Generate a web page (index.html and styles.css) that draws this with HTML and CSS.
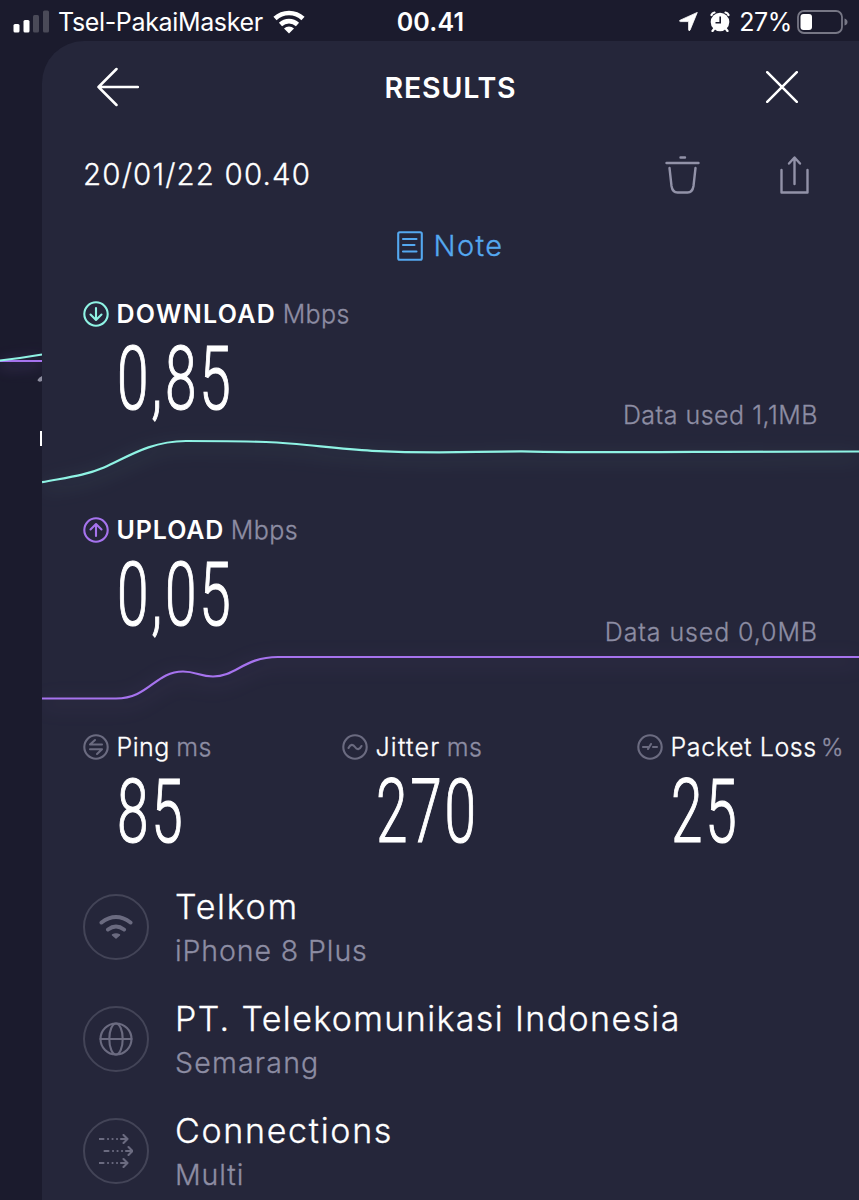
FILE: index.html
```html
<!DOCTYPE html>
<html lang="id">
<head>
  <meta charset="UTF-8">
  <meta name="viewport" content="width=device-width, initial-scale=1.0">
  <title>Results</title>
  <link rel="stylesheet" href="styles.css">
</head>
<body>
  <div class="status-bar">
    <div class="status-left">
      <svg class="signal" width="36" height="24" viewBox="0 0 36 24">
        <rect x="0.500" y="14" width="6" height="8.500" rx="1.500" fill="#fff"/>
        <rect x="10.500" y="10" width="6" height="12.500" rx="1.500" fill="#fff"/>
        <rect x="20" y="5" width="6" height="17.500" rx="1.500" fill="#4a4a58"/>
        <rect x="30" y="0.500" width="6" height="22" rx="1.500" fill="#4a4a58"/>
      </svg>
      <span class="carrier">Tsel-PakaiMasker</span>
      <svg class="wifi" width="32" height="24" viewBox="0 0 32 24" fill="none" stroke="#fff" stroke-width="4.600">
        <path d="M2 8.500a20.500 20.500 0 0 1 28 0"/>
        <path d="M7.500 14.500a12.500 12.500 0 0 1 17 0"/>
        <path d="M16 23.500l-5-5a7.500 7.500 0 0 1 10 0z" fill="#fff" stroke="none"/>
      </svg>
    </div>
    <span class="clock">00.41</span>
    <div class="status-right">
      <svg width="19" height="19" viewBox="0 0 19 19"><path d="M18.300 0.400L11 18.200q-1 1.200-1.400-.3V9.600H1.400q-1.800-.4-.3-1.400z" fill="#fff" stroke="#fff" stroke-width="0.800" stroke-linejoin="round"/></svg>
      <svg class="alarm" width="20" height="21" viewBox="0 0 20 21">
        <circle cx="10" cy="11" r="9.300" fill="#fff"/>
        <path d="M1.500 4A4 4 0 0 1 4.500 1.500M15.500 1.500a4 4 0 0 1 3 2.500M4 18l-1.500 2M16 18l1.500 2" stroke="#fff" stroke-width="2.200" fill="none" stroke-linecap="round"/>
        <path d="M10.200 5.500v6.300H5.500" stroke="#1b1b2d" stroke-width="1.600" fill="none"/>
      </svg>
      <span class="percent">27%</span>
      <svg width="51" height="24" viewBox="0 0 51 24">
        <rect x="1" y="1" width="44" height="22" rx="6" fill="none" stroke="#777785" stroke-width="1.800"/>
        <rect x="3.500" y="4" width="11.500" height="16" rx="3" fill="#fff"/>
        <path d="M47.500 8.500q3 1 3 3.500t-3 3.500z" fill="#777785"/>
      </svg>
    </div>
  </div>

  <div class="screen">
    <!-- Edge of the previous page behind the sheet -->
    <div class="behind">
      <svg width="42" height="140" viewBox="0 0 42 140">
        <path class="glow-line" d="M0 41H42" stroke="#a673ee" stroke-width="2.200"/>
        <path class="glow-line" d="M0 40.500Q22 38 42 34.500" fill="none" stroke="#8ff3e4" stroke-width="2.200"/>
        <path d="M42 56v5q-3 1.500-4.500-.5 0-2 4.500-4.500z" fill="#8d8d9f"/>
        <path d="M41 111v15" stroke="#fff" stroke-width="2"/>
      </svg>
    </div>

    <main class="sheet">
      <header class="sheet-header">
        <svg width="43" height="40" viewBox="0 0 43 40" class="line-icon white"><path d="M42 20H2.500M20.500 2L2.500 20l18 18"/></svg>
        <h1>RESULTS</h1>
        <svg width="32" height="32" viewBox="0 0 32 32" class="line-icon white"><path d="M1.200 1.200l29.600 29.600M30.800 1.200L1.200 30.800"/></svg>
      </header>

      <div class="date-row">
        <span class="date">20/01/22 00.40</span>
        <div class="actions">
          <svg width="36" height="40" viewBox="0 0 36 40" class="line-icon muted"><path d="M15.500 2.500h4.500M1.500 8h32M4.500 13l2 18q1 6.500 6 6.500h10q5 0 6-6.500l2-18"/></svg>
          <svg width="30" height="40" viewBox="0 0 30 40" class="line-icon muted"><path d="M1.500 15v22.500h26V15M14.500 29V3M9 8.500L14.500 2.500l5.500 6"/></svg>
        </div>
      </div>

      <div class="note">
        <svg width="26" height="30" viewBox="0 0 26 30" class="line-icon"><rect x="1.200" y="1.200" width="23.600" height="27.600" rx="1.500"/><path d="M6 8h13.500M6 14h11.500M6 20.500h13.500"/></svg>
        <span>Note</span>
      </div>

      <section class="metric">
        <div class="metric-title download">
          <svg width="26" height="26" viewBox="0 0 26 26" class="line-icon"><circle cx="13" cy="13" r="11.700"/><path d="M13 7v11.500M7.500 13.500L13 19l5.500-5.500"/></svg>
          <b>DOWNLOAD</b> <span class="unit">Mbps</span>
        </div>
        <div class="metric-row">
          <span class="value">0,85</span>
          <span class="data-used">Data used 1,1MB</span>
        </div>
        <svg class="graph download" width="817" height="63" viewBox="0 0 817 63">
          <path d="M0 54.200C28 49 43 47.500 62 39.500C84 30 107 13.200 144 13C170 13 205 13.500 224 14C262 15.500 292 21 330 22.800C405 26.500 428 23.200 480 23.300C550 24.800 605 24.200 680 23.800L817 23.500"/>
        </svg>
      </section>

      <section class="metric">
        <div class="metric-title upload">
          <svg width="26" height="26" viewBox="0 0 26 26" class="line-icon"><circle cx="13" cy="13" r="11.700"/><path d="M13 19V7.500M7.500 12.500L13 7l5.500 5.500"/></svg>
          <b>UPLOAD</b> <span class="unit">Mbps</span>
        </div>
        <div class="metric-row">
          <span class="value">0,05</span>
          <span class="data-used used-upload">Data used 0,0MB</span>
        </div>
        <svg class="graph upload" width="817" height="63" viewBox="0 0 817 63">
          <path d="M0 54.500H74C107 54.500 113 27.500 141 27.500C154 27.500 158 32.500 171 32.500C194 32.500 202 13 236 13H817"/>
        </svg>
      </section>

      <section class="stats">
        <div>
          <div class="metric-title stat-title">
            <svg width="26" height="26" viewBox="0 0 26 26" class="line-icon"><circle cx="13" cy="13" r="11.700"/><path d="M19 10.500H7L12 6M7 15.200h12L14 20"/></svg>
            <span class="label ping">Ping</span> <span class="unit">ms</span>
          </div>
          <span class="value">85</span>
        </div>
        <div>
          <div class="metric-title stat-title">
            <svg width="26" height="26" viewBox="0 0 26 26" class="line-icon"><circle cx="13" cy="13" r="11.700"/><path d="M6.500 14c2-4 4.500-4 6.500-1s4.500 3 6.500-1"/></svg>
            <span class="label jitter">Jitter</span> <span class="unit">ms</span>
          </div>
          <span class="value">270</span>
        </div>
        <div>
          <div class="metric-title stat-title">
            <svg width="26" height="26" viewBox="0 0 26 26" class="line-icon"><circle cx="13" cy="13" r="11.700"/><path d="M6 13h5M11 15l3-5M16 13h4"/></svg>
            <span class="label loss">Packet Loss</span> <span class="unit percent-unit">%</span>
          </div>
          <span class="value">25</span>
        </div>
      </section>

      <ul class="details">
        <li>
          <div class="badge">
            <svg width="34" height="26" viewBox="0 0 34 26" fill="none" stroke="#6b6b80" stroke-width="4" stroke-linecap="round"><path d="M2.500 8.500Q17-2.500 31.500 8.500M9 15.500q8-6 16 0"/><path d="M13.500 21q3.500-2 7 0L17 24z" fill="#6b6b80" stroke-width="1.500" stroke-linejoin="round"/></svg>
          </div>
          <div class="detail-text">
            <p class="name">Telkom</p>
            <p class="sub">iPhone 8 Plus</p>
          </div>
        </li>
        <li>
          <div class="badge">
            <svg width="34" height="34" viewBox="0 0 34 34" class="line-icon dim"><circle cx="17" cy="17" r="15.500"/><ellipse cx="17" cy="17" rx="6.700" ry="15.500"/><path d="M1.500 17h31"/></svg>
          </div>
          <div class="detail-text">
            <p class="name isp">PT. Telekomunikasi Indonesia</p>
            <p class="sub city">Semarang</p>
          </div>
        </li>
        <li>
          <div class="badge">
            <svg width="34" height="34" viewBox="0 0 34 34" class="line-icon dim"><path d="M0.500 5h4M9 5h.1M13.500 5h.1M18 5h.1M22 5h6M24.500 1l4 4-4 4M5.500 17h4M14 17h.1M18.500 17h.1M23 17h.1M27 17h6M29.500 13l4 4-4 4M0.500 29h4M9 29h.1M13.500 29h.1M18 29h.1M22 29h6M24.500 25l4 4-4 4"/></svg>
          </div>
          <div class="detail-text">
            <p class="name">Connections</p>
            <p class="sub">Multi</p>
          </div>
        </li>
      </ul>
    </main>
  </div>
</body>
</html>
```
FILE: styles.css
```css
* {
  box-sizing: border-box;
}
body {
  margin: 0;
  height: 1200px;
  overflow: hidden;
  background: #1b1b2d;
  color: #fff;
  font-family: Inter, "Liberation Sans", sans-serif;
  font-weight: 300;
}
svg {
  display: block;
  flex-shrink: 0;
}
.status-bar {
  display: grid;
  grid-template-columns: 1fr auto 1fr;
  align-items: center;
  height: 41px;
  padding: 2px 11px 0 13px;
  font-size: 25px;
  font-weight: 400;
}
.status-left,
.status-right {
  display: flex;
  align-items: center;
}
.status-right {
  justify-content: flex-end;
}
.carrier {
  margin: 0 10px 0 9px;
  letter-spacing: -0.35px;
}
.clock {
  font-weight: 600;
  letter-spacing: 0.2px;
}
.alarm {
  margin: 0 9px 0 12px;
}
.percent {
  margin-right: 5px;
  letter-spacing: -0.4px;
}
.screen {
  display: flex;
  height: 1159px;
  -webkit-text-stroke: 0.3px;
}
.behind {
  width: 42px;
  padding-top: 279px;
}
.glow-line {
  filter: drop-shadow(0 4px 8px #a673ee66);
}
.sheet {
  width: 817px;
  height: 1159px;
  overflow: hidden;
  background: #25263a;
  border-top-left-radius: 42px;
}
.line-icon {
  fill: none;
  stroke: currentColor;
  stroke-width: 2.1;
  stroke-linecap: round;
  stroke-linejoin: round;
}
.white {
  stroke-width: 2.5;
}
.muted {
  color: #9292a8;
  stroke-width: 2.4;
}
.dim {
  color: #6b6b80;
}
.sheet-header {
  display: grid;
  grid-template-columns: 43px 1fr 32px;
  align-items: center;
  height: 92px;
  padding: 0 61px 0 54px;
}
h1 {
  margin: 0 0 0 -4px;
  text-align: center;
  font-size: 28.5px;
  font-weight: 600;
  letter-spacing: 0.8px;
  -webkit-text-stroke: 0;
}
.date-row {
  display: flex;
  align-items: center;
  justify-content: space-between;
  height: 84px;
  padding: 0 49px 0 41px;
}
.date {
  margin-top: -2px;
  font-size: 29.5px;
  letter-spacing: 1.15px;
}
.actions {
  display: flex;
  gap: 79px;
}
.note {
  display: flex;
  align-items: center;
  justify-content: center;
  gap: 10px;
  height: 58px;
  color: #54a8f0;
  font-size: 29px;
  letter-spacing: 1.4px;
}
.note span {
  margin-top: -2px;
}
.metric {
  height: 216px;
  padding-top: 19px;
}
.metric-title {
  display: flex;
  align-items: center;
  height: 40px;
  padding-left: 41px;
  font-size: 25px;
}
.metric-title svg {
  margin-right: 7.5px;
}
.metric-title b {
  color: #fff;
  font-weight: 600;
  letter-spacing: 1.3px;
  -webkit-text-stroke: 0;
}
.upload b {
  letter-spacing: 0.9px;
}
.unit {
  margin-left: 6.5px;
  color: #8d8da3;
  letter-spacing: 0.4px;
}
.download {
  color: #8ff3e4;
}
.upload {
  color: #a673ee;
}
.metric-row {
  display: flex;
  justify-content: space-between;
  height: 94px;
  padding: 0 41px 0 75px;
}
.value {
  display: block;
  width: max-content;
  height: 88px;
  line-height: 90px;
  font-family: Roboto, sans-serif;
  font-size: 89px;
  font-weight: 300;
  letter-spacing: 4.4px;
  -webkit-text-stroke: 1.2px #fff;
  transform: scaleX(0.638);
  transform-origin: left center;
}
.data-used {
  align-self: flex-end;
  height: 28px;
  line-height: 30px;
  color: #8d8da3;
  font-size: 25px;
  letter-spacing: 0.5px;
}
.used-upload {
  height: 27px;
  letter-spacing: 0.9px;
}
.graph {
  overflow: visible;
  fill: none;
  stroke: currentColor;
  stroke-width: 2.2;
  filter: drop-shadow(0 5px 10px rgb(from currentColor r g b / 0.3));
}
.stats {
  display: grid;
  grid-template-columns: 259px 295px 1fr;
  height: 164px;
  padding: 20px 0 0 41px;
}
.stat-title {
  padding-left: 0;
  color: #6b6b80;
  white-space: nowrap;
}
.label {
  color: #fff;
}
.ping {
  letter-spacing: 0.5px;
}
.jitter {
  letter-spacing: 1.2px;
}
.loss {
  letter-spacing: 0.6px;
}
.percent-unit {
  margin-left: 4px;
  font-size: 24px;
}
.stats .value {
  margin-left: 34px;
}
.details {
  list-style: none;
  margin: 0;
  padding: 0 0 0 41px;
}
.details li {
  display: flex;
  align-items: center;
  height: 112px;
}
.badge {
  display: flex;
  align-items: center;
  justify-content: center;
  width: 66px;
  height: 66px;
  border: 2.5px solid #434457;
  border-radius: 50%;
}
.detail-text {
  padding: 2px 0 0 26px;
}
.detail-text p {
  margin: 0;
}
.name {
  font-size: 34px;
  line-height: 44px;
  letter-spacing: 1.7px;
}
.isp {
  letter-spacing: 1.37px;
}
.sub {
  color: #8d8da3;
  font-size: 28.5px;
  line-height: 43px;
  letter-spacing: 0.9px;
}
.city {
  letter-spacing: 1.2px;
}
```
